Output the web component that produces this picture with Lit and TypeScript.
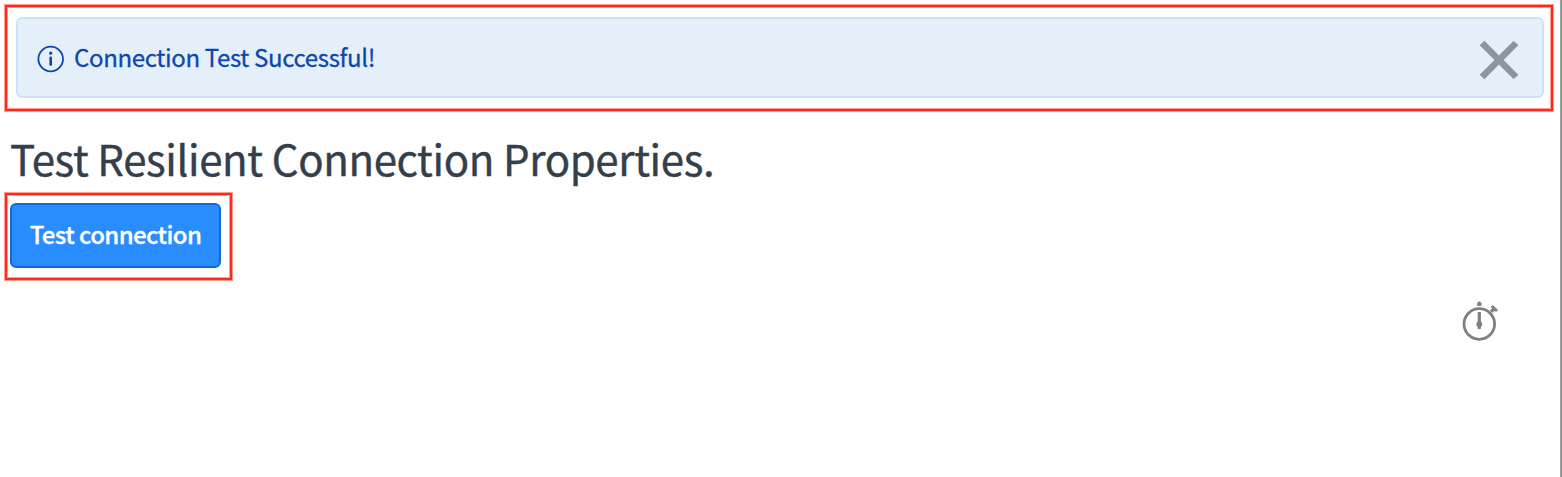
import { LitElement, html, css } from "lit";
import { customElement } from "lit/decorators.js";

@customElement("app-root")
export class AppRoot extends LitElement {
  static styles = css`
    :host {
      display: block;
      box-sizing: border-box;
      height: 477px;
      padding: 5px 7px 0 5px;
      overflow: hidden;
      background: linear-gradient(#a2a2a2, #a2a2a2) right 1px top / 1px 100% no-repeat,
        linear-gradient(#8a8a8a, #8a8a8a) right top / 1px 100% no-repeat, #fff;
      font-family: "Noto Sans CJK SC", "Noto Sans", sans-serif;
    }
    * {
      box-sizing: border-box;
    }
    .frame {
      border: 2px solid #ff2a1c;
      box-shadow: 0 0 0 1px #ff9d95, inset 0 0 0 1px #ff9d95;
    }
    .frame.notice {
      width: 1548px;
      height: 106px;
      padding: 10px 7px 11px 9px;
    }
    .frame.action {
      width: 227px;
      height: 87px;
      padding: 8px 0 0 3px;
    }
    .alert {
      display: flex;
      align-items: center;
      height: 81px;
      padding: 0 23px 0 19px;
      border: 2px solid #cce1f9;
      border-radius: 6px;
      background: #e5effa;
      color: #0d47ad;
    }
    .info {
      width: 28px;
      height: 28px;
      margin-top: 3px;
      flex: none;
    }
    .message {
      flex: 1;
      margin: 0 0 2px 9px;
      font-size: 24px;
      line-height: 34px;
      letter-spacing: -0.35px;
      -webkit-text-stroke: 0.3px;
      white-space: nowrap;
    }
    .close {
      width: 40px;
      height: 40px;
      margin-top: 5px;
      flex: none;
    }
    h1 {
      margin: 13px 0 2px 5px;
      height: 67px;
      font-size: 42px;
      line-height: 67px;
      font-weight: 400;
      letter-spacing: -0.39px;
      -webkit-text-stroke: 0.4px;
      color: #343f4b;
      white-space: nowrap;
    }
    button {
      display: block;
      width: 211px;
      height: 65px;
      padding: 0 0 3px;
      border: 2px solid #106bd9;
      border-radius: 6px;
      background: #2a8dff;
      color: #fff;
      font: 500 24px/58px "Noto Sans CJK SC", "Noto Sans", sans-serif;
      letter-spacing: -0.6px;
      -webkit-text-stroke: 0.3px;
      white-space: nowrap;
    }
    .status {
      display: flex;
      justify-content: flex-end;
      padding: 20px 56px 0 0;
    }
    .timer {
      width: 40px;
      height: 44px;
    }
  `;

  render() {
    return html`
      <div class="frame notice">
        <div class="alert">
          <svg class="info" viewBox="0 0 28 28">
            <circle cx="13.7" cy="14" r="12.3" fill="none" stroke="#0d47ad" stroke-width="1.8" />
            <circle cx="13.7" cy="8.2" r="1.6" fill="#0d47ad" />
            <rect x="12.4" y="11.4" width="2.6" height="9.4" rx="1" fill="#0d47ad" />
          </svg>
          <span class="message">Connection Test Successful!</span>
          <svg class="close" viewBox="0 0 40 40">
            <path d="M3 3L37 37M37 3L3 37" fill="none" stroke="#8c96a1" stroke-width="6.6" />
          </svg>
        </div>
      </div>
      <h1>Test Resilient Connection Properties.</h1>
      <div class="frame action">
        <button>Test connection</button>
      </div>
      <div class="status">
        <svg class="timer" viewBox="0 0 40 44">
          <g fill="none" stroke="#808080">
            <circle cx="20.3" cy="24" r="15.3" stroke-width="2.8" />
            <path d="M20.3 12V29" stroke-width="3.2" />
            <path d="M32.7 6L38 11" stroke-width="3" />
            <path d="M35 9L32 11.8" stroke-width="3.4" />
          </g>
          <path d="M18.2 6V3.2L19.5 1.6H21.1L22.4 3.2V6Z" fill="#808080" />
          <circle cx="20.3" cy="24.2" r="2.9" fill="#808080" />
        </svg>
      </div>
    `;
  }
}
